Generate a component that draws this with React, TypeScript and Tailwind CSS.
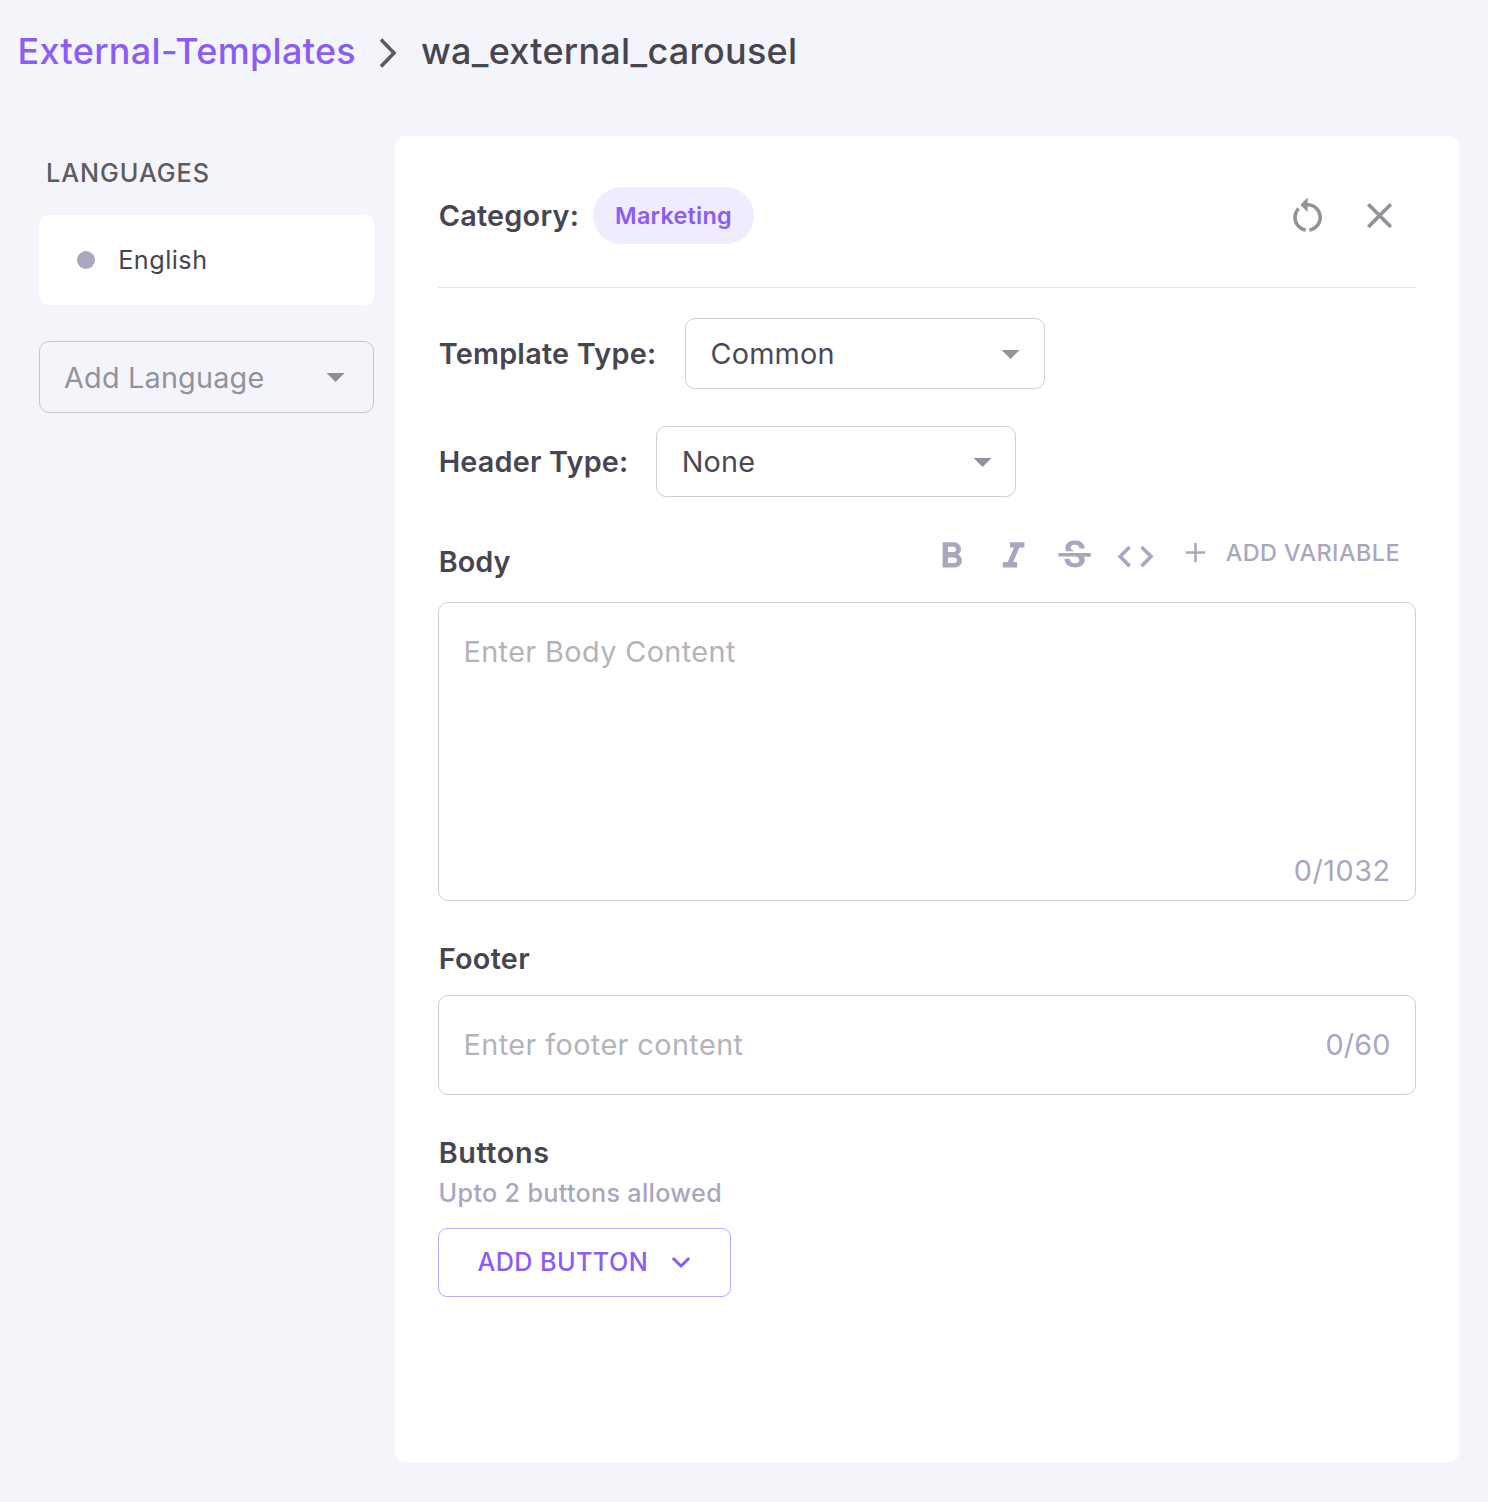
import React from "react";

const labelClass = "text-[28.8px] font-semibold text-[#474551]";

function Icon({ d, className }: { d: string; className: string }) {
  return (
    <svg viewBox="0 0 24 24" fill="currentColor" className={`shrink-0 ${className}`} aria-hidden="true">
      <path d={d} />
    </svg>
  );
}

const icons = {
  restart:
    "M12 5V2L8 6l4 4V7c3.31 0 6 2.69 6 6 0 2.97-2.17 5.43-5 5.91v2.02c3.95-.49 7-3.85 7-7.93 0-4.42-3.58-8-8-8zM6 13c0-1.65.67-3.15 1.76-4.24L6.34 7.34C4.9 8.79 4 10.79 4 13c0 4.08 3.05 7.44 7 7.93v-2.02c-2.83-.48-5-2.94-5-5.91z",
  close:
    "M19 6.41 17.59 5 12 10.59 6.41 5 5 6.41 10.59 12 5 17.59 6.41 19 12 13.41 17.59 19 19 17.59 13.41 12z",
  dropDown: "M7 10l5 5 5-5z",
  bold:
    "M15.6 10.79c.97-.67 1.65-1.77 1.65-2.79 0-2.26-1.75-4-4-4H7v14h7.04c2.09 0 3.71-1.7 3.71-3.79 0-1.52-.86-2.82-2.15-3.42zM10 6.5h3c.83 0 1.5.67 1.5 1.5s-.67 1.5-1.5 1.5h-3v-3zm3.5 9H10v-3h3.5c.83 0 1.5.67 1.5 1.5s-.67 1.5-1.5 1.5z",
  italic: "M10 4v3h2.21l-3.42 8H6v3h8v-3h-2.21l3.42-8H18V4z",
  strike:
    "M6.85 7.08C6.85 4.37 9.45 3 12.24 3c1.64 0 3 .49 3.9 1.28.77.65 1.46 1.73 1.46 3.24h-3.01c0-.31-.05-.59-.15-.85-.29-.86-1.2-1.28-2.25-1.28-1.86 0-2.34 1.02-2.34 1.7 0 .48.25.88.74 1.21.38.25.77.48 1.41.7H7.39c-.21-.34-.54-.89-.54-1.92zM21 12v-2H3v2h9.62c1.15.45 1.96.75 1.96 1.97 0 1-.81 1.67-2.28 1.67-1.54 0-2.93-.54-2.93-2.51H6.4c0 .55.08 1.13.24 1.58.81 2.29 3.29 3.3 5.67 3.3 2.27 0 5.3-.89 5.3-4.05 0-.3-.01-1.16-.48-1.94H21V12z",
  code:
    "M9.4 16.6 4.8 12l4.6-4.6L8 6l-6 6 6 6 1.4-1.4zm5.2 0 4.6-4.6-4.6-4.6L16 6l6 6-6 6-1.4-1.4z",
  add: "M19 12.9h-6.1V19h-1.8v-6.1H5v-1.8h6.1V5h1.8v6.1H19z",
};

function Select({ value }: { value: string }) {
  return (
    <button className="flex h-[71px] w-[360px] items-center justify-between rounded-[10px] border border-[#cfced2] pr-[11.4px] pl-[24.4px] text-[28.8px] tracking-[0.22px] text-[#4b4955]">
      {value}
      <Icon d={icons.dropDown} className="size-[43.2px] text-[#939199]" />
    </button>
  );
}

function Breadcrumb() {
  return (
    <nav className="flex h-[102px] items-center pl-[17.5px] text-[36px] font-medium">
      <a className="w-[361px] tracking-[0.31px] text-[#8b5cf6]">External-Templates</a>
      <svg viewBox="0 0 20 32" className="mt-1 h-8 w-5 shrink-0" fill="none" stroke="#5c5a60" strokeWidth="3.6" aria-hidden="true">
        <path d="M2 2.6 15 16 2 29.4" />
      </svg>
      <span className="ml-[22.5px] tracking-[0.25px] text-[#474551]">wa_external_carousel</span>
    </nav>
  );
}

function Languages() {
  return (
    <aside className="flex w-[335px] flex-col">
      <h2 className="mt-[17px] ml-[7px] text-[25.2px] leading-10 font-medium tracking-[0.95px] text-[#5c5b62]">
        LANGUAGES
      </h2>
      <button className="mt-[22px] flex h-[90px] items-center rounded-[9px] bg-white pl-[38px]">
        <span className="size-[18px] rounded-full bg-[#aaa6c0]" />
        <span className="ml-[23.2px] pt-[2px] text-[25.2px] tracking-[0.5px] text-[#474551]">English</span>
      </button>
      <button className="mt-9 flex h-[72px] items-center justify-between rounded-[10px] border border-[#c6c6cd] pr-4 pl-6 text-[28.8px] tracking-[0.2px] text-[#949399]">
        <span className="pt-[2px]">Add Language</span>
        <Icon d={icons.dropDown} className="size-[43.2px] text-[#8f8e94]" />
      </button>
    </aside>
  );
}

function Editor() {
  return (
    <main className="flex h-[1326px] w-[1064px] flex-col rounded-[10px] bg-white px-[43px] pt-[51px]">
      <header className="flex h-[101px] items-start border-b border-[#e5e5e8]">
        <div className="flex h-[57px] w-full items-center">
          <span className={`w-[155px] pl-[0.7px] tracking-[0.25px] ${labelClass}`}>Category:</span>
          <span className="flex h-[57px] w-[161px] items-center justify-center rounded-full bg-[#f0ebfd] text-[23.4px] font-semibold tracking-[0.25px] text-[#8b5cf6]">
            Marketing
          </span>
          <div className="mr-[14.5px] ml-auto flex items-center gap-[28.8px] text-[#939199]">
            <Icon d={icons.restart} className="size-[43.2px]" />
            <Icon d={icons.close} className="size-[43.2px]" />
          </div>
        </div>
      </header>

      <div className="mt-[30px] flex items-center">
        <span className={`w-[247px] pl-[0.7px] tracking-[0.25px] ${labelClass}`}>Template Type:</span>
        <Select value="Common" />
      </div>
      <div className="mt-[37px] flex items-center">
        <span className={`w-[218.3px] pl-[0.7px] tracking-[0.2px] ${labelClass}`}>Header Type:</span>
        <Select value="None" />
      </div>

      <div className="mt-[38px] flex h-[43px] items-center">
        <span className={`pt-[10px] pl-[0.7px] ${labelClass}`}>Body</span>
        <div className="mr-[16px] ml-auto flex items-center text-[#aaa6c0]">
          <div className="flex items-center gap-[18.2px]">
            <Icon d={icons.bold} className="size-[43.2px]" />
            <Icon d={icons.italic} className="size-[43.2px]" />
            <Icon d={icons.strike} className="size-[43.2px]" />
            <Icon d={icons.code} className="size-[43.2px]" />
          </div>
          <button className="ml-[21.5px] flex items-center pb-[7px] text-[23.4px] font-medium tracking-[0.45px]">
            <Icon d={icons.add} className="size-[33px]" />
            <span className="ml-[13.6px]">ADD VARIABLE</span>
          </button>
        </div>
      </div>
      <div className="mt-6 flex h-[299px] flex-col justify-between rounded-[10px] border border-[#cfced2] px-[24.5px] pt-[27px] pb-[8px] text-[28.8px] leading-[43px] tracking-[0.4px]">
        <span className="text-[#b4b3b9]">Enter Body Content</span>
        <span className="self-end tracking-[0.5px] text-[#aaa6c0]">0/1032</span>
      </div>

      <h3 className={`mt-9 pl-[0.7px] leading-[43px] tracking-[0.3px] ${labelClass}`}>Footer</h3>
      <div className="mt-[15px] flex h-[100px] items-center justify-between rounded-[10px] border border-[#cfced2] px-[24.5px] text-[28.8px] tracking-[0.42px]">
        <span className="text-[#b4b3b9]">Enter footer content</span>
        <span className="tracking-[0.1px] text-[#aaa6c0]">0/60</span>
      </div>

      <h3 className={`mt-9 pl-[0.7px] leading-[43px] tracking-[0.6px] ${labelClass}`}>Buttons</h3>
      <p className="mt-1 pl-[0.6px] text-[25.2px] leading-[30px] font-medium tracking-[0.3px] text-[#aaa6c0]">
        Upto 2 buttons allowed
      </p>
      <button className="mt-5 flex h-[69px] w-[293px] items-center rounded-[9px] border border-[#c0a6fa] pl-[38.5px] text-[25.2px] font-medium tracking-[0.4px] text-[#8b5cf6]">
        <span className="w-[193.5px] text-left">ADD BUTTON</span>
        <svg viewBox="0 0 20 12" className="h-3 w-5 shrink-0" fill="none" stroke="currentColor" strokeWidth="2.9" strokeLinecap="round" aria-hidden="true">
          <path d="M2.7 1.9 10 9l7.3-7.1" />
        </svg>
      </button>
    </main>
  );
}

export default function App() {
  return (
    <div className="min-h-[1502px] w-[1488px] bg-[#f4f5fb] font-['Inter',sans-serif]">
      <Breadcrumb />
      <div className="mt-[34px] flex items-start gap-[21px] pl-[39px]">
        <Languages />
        <Editor />
      </div>
    </div>
  );
}
